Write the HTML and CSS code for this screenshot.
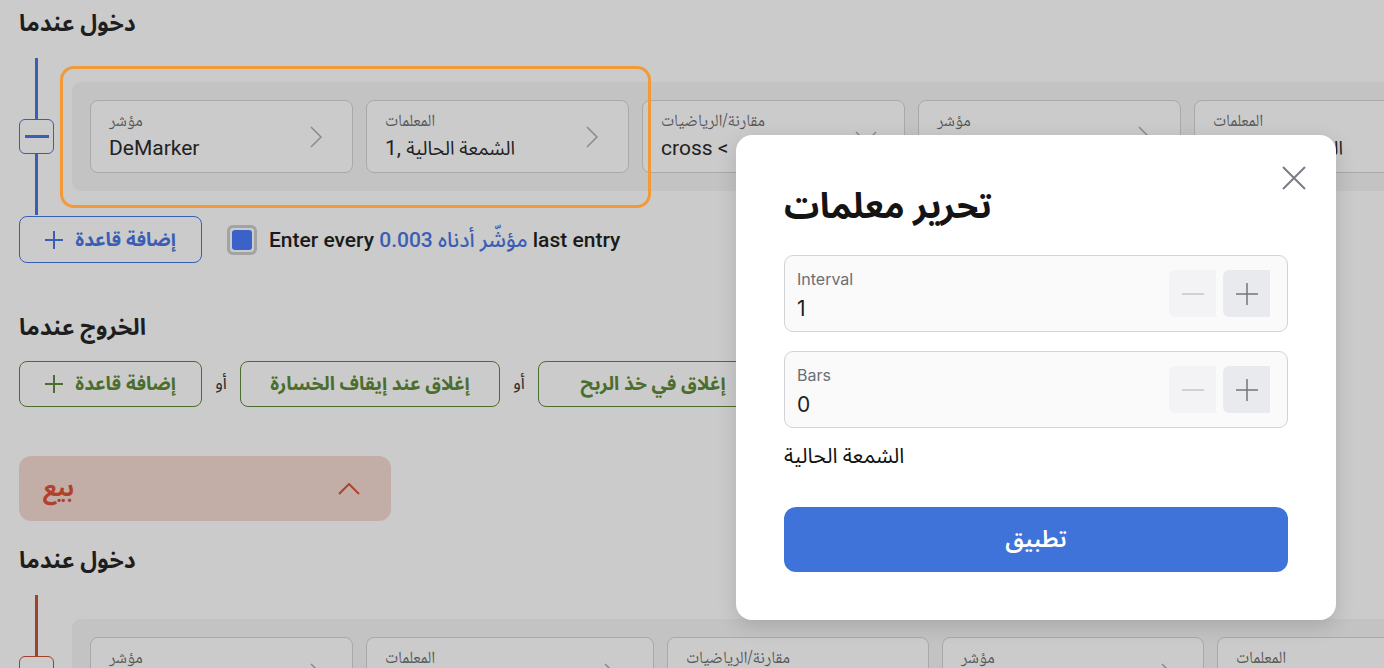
FILE: index.html
```html
<!DOCTYPE html>
<html lang="ar">
<head>
<meta charset="utf-8">
<title>تحرير معلمات</title>
<link rel="stylesheet" href="styles.css">
</head>
<body>
<div class="page">
  <h2 class="section-title">دخول عندما</h2>
  <div class="rule-block">
    <div class="rail rail-blue">
      <span class="rail-line"></span>
      <span class="rail-btn"><span class="rail-minus"></span></span>
      <span class="rail-line"></span>
    </div>
    <div class="group">
      <div class="card w263">
        <div class="card-text"><span class="card-label">مؤشر</span><span class="card-value">DeMarker</span></div>
        <svg class="chev" viewBox="0 0 12 22"><path d="M1 1l10 10L1 21"/></svg>
      </div>
      <div class="card w263">
        <div class="card-text"><span class="card-label">المعلمات</span><span class="card-value">1, <span class="ar">الشمعة الحالية</span></span></div>
        <svg class="chev" viewBox="0 0 12 22"><path d="M1 1l10 10L1 21"/></svg>
      </div>
      <div class="card w263">
        <div class="card-text"><span class="card-label">مقارنة/الرياضيات</span><span class="card-value">cross &lt;</span></div>
        <svg class="chev-down" viewBox="0 0 22 12"><path d="M1 1l10 10L21 1"/></svg>
      </div>
      <div class="card w263">
        <div class="card-text"><span class="card-label">مؤشر</span><span class="card-value">DeMarker</span></div>
        <svg class="chev" viewBox="0 0 12 22"><path d="M1 1l10 10L1 21"/></svg>
      </div>
      <div class="card w263">
        <div class="card-text"><span class="card-label">المعلمات</span><span class="card-value">1, <span class="ar">الشمعة الحالية</span></span></div>
        <svg class="chev" viewBox="0 0 12 22"><path d="M1 1l10 10L1 21"/></svg>
      </div>
      <div class="highlight"></div>
    </div>
  </div>

  <div class="add-row">
    <button class="rule-btn btn-blue">
      <svg class="plus" viewBox="0 0 18 18"><path d="M9 0v18M0 9h18"/></svg>
      <span>إضافة قاعدة</span>
    </button>
    <span class="check"><span class="check-fill"></span></span>
    <span class="every">Enter every <span class="every-accent">0.003 مؤشّر أدناه</span> last entry</span>
  </div>

  <h2 class="section-title exit-title">الخروج عندما</h2>
  <div class="exit-row">
    <button class="rule-btn btn-green">
      <svg class="plus" viewBox="0 0 18 18"><path d="M9 0v18M0 9h18"/></svg>
      <span>إضافة قاعدة</span>
    </button>
    <span class="or">أو</span>
    <button class="rule-btn btn-green wide">إغلاق عند إيقاف الخسارة</button>
    <span class="or">أو</span>
    <button class="rule-btn btn-green wide2">إغلاق في خذ الربح</button>
  </div>

  <div class="sell-bar">
    <span class="sell-label">بيع</span>
    <svg class="sell-chev" viewBox="0 0 22 12"><path d="M1 11L11 1l10 10"/></svg>
  </div>

  <h2 class="section-title second-title">دخول عندما</h2>
  <div class="rule-block">
    <div class="rail rail-red">
      <span class="rail-line"></span>
      <span class="rail-btn"><span class="rail-minus"></span></span>
      <span class="rail-line"></span>
    </div>
    <div class="group">
      <div class="card w263">
        <div class="card-text"><span class="card-label">مؤشر</span><span class="card-value">DeMarker</span></div>
        <svg class="chev" viewBox="0 0 12 22"><path d="M1 1l10 10L1 21"/></svg>
      </div>
      <div class="card w288">
        <div class="card-text"><span class="card-label">المعلمات</span><span class="card-value">1, <span class="ar">الشمعة الحالية</span></span></div>
        <svg class="chev" viewBox="0 0 12 22"><path d="M1 1l10 10L1 21"/></svg>
      </div>
      <div class="card w262">
        <div class="card-text"><span class="card-label">مقارنة/الرياضيات</span><span class="card-value">cross &gt;</span></div>
        <svg class="chev-down" viewBox="0 0 22 12"><path d="M1 1l10 10L21 1"/></svg>
      </div>
      <div class="card w262">
        <div class="card-text"><span class="card-label">مؤشر</span><span class="card-value">DeMarker</span></div>
        <svg class="chev" viewBox="0 0 12 22"><path d="M1 1l10 10L1 21"/></svg>
      </div>
      <div class="card w263">
        <div class="card-text"><span class="card-label">المعلمات</span><span class="card-value">1, <span class="ar">الشمعة الحالية</span></span></div>
        <svg class="chev" viewBox="0 0 12 22"><path d="M1 1l10 10L1 21"/></svg>
      </div>
    </div>
  </div>
</div>

<div class="modal">
  <svg class="close" viewBox="0 0 24 24"><path d="M1 1l22 22M23 1L1 23"/></svg>
  <h1 class="modal-title">تحرير معلمات</h1>
  <div class="field">
    <div class="field-text">
      <span class="field-label">Interval</span>
      <span class="field-value">1</span>
    </div>
    <div class="stepper">
      <span class="step step-minus"><svg viewBox="0 0 22 22"><path d="M0 11h22"/></svg></span>
      <span class="step step-plus"><svg viewBox="0 0 22 22"><path d="M11 0v22M0 11h22"/></svg></span>
    </div>
  </div>
  <div class="field">
    <div class="field-text">
      <span class="field-label">Bars</span>
      <span class="field-value">0</span>
    </div>
    <div class="stepper">
      <span class="step step-minus"><svg viewBox="0 0 22 22"><path d="M0 11h22"/></svg></span>
      <span class="step step-plus"><svg viewBox="0 0 22 22"><path d="M11 0v22M0 11h22"/></svg></span>
    </div>
  </div>
  <p class="candle">الشمعة الحالية</p>
  <button class="apply">تطبيق</button>
</div>
</body>
</html>
```

FILE: styles.css
```css
* { box-sizing: border-box; }

html, body {
  margin: 0;
  padding: 0;
}

body {
  width: 1384px;
  height: 668px;
  overflow: hidden;
  background: #cbcbcb;
  font-family: Roboto, "Noto Sans Arabic", "Noto Sans", "DejaVu Sans", sans-serif;
  color: #1c1c1c;
  position: relative;
}

.page {
  padding: 10px 0 0 19px;
  height: 668px;
  overflow: hidden;
}

.section-title {
  margin: 0;
  font-size: 23px;
  line-height: 28px;
  font-weight: 700;
  color: #1e1e1e;
}

.rule-block {
  margin-top: 20px;
  display: flex;
  align-items: center;
  gap: 18px;
}

.rail {
  width: 35px;
  flex-shrink: 0;
  display: flex;
  flex-direction: column;
  align-items: center;
}

.rail-line {
  display: block;
  width: 3px;
  height: 61px;
}

.rail-btn {
  width: 35px;
  height: 35px;
  border-radius: 6px;
  display: flex;
  align-items: center;
  justify-content: center;
  border: 1px solid;
}

.rail-minus {
  display: block;
  width: 24px;
  height: 3px;
}

.rail-blue .rail-line, .rail-blue .rail-minus { background: #3a5eb5; }
.rail-blue .rail-btn { border-color: #3a5eb5; }
.rail-red .rail-line, .rail-red .rail-minus { background: #a3402b; }
.rail-red .rail-btn { border-color: #a3402b; }

.group {
  position: relative;
  flex: 1;
  min-width: 0;
  margin-right: -30px;
  height: 109px;
  padding: 18px;
  background: #c3c3c3;
  border-radius: 9px;
  display: flex;
  gap: 13px;
}

.highlight {
  position: absolute;
  left: -12px;
  top: -16px;
  width: 591px;
  height: 142px;
  border: 3px solid #f19a3a;
  border-radius: 14px;
}

.card {
  flex-shrink: 0;
  height: 73px;
  border: 1px solid #a9a9a9;
  border-radius: 8px;
  background: #cbcbcb;
  display: flex;
  align-items: center;
  justify-content: space-between;
  padding: 0 30px 0 18px;
}

.w263 { width: 263px; }
.w262 { width: 262px; }
.w288 { width: 288px; padding-right: 37px; }

.card-text {
  display: flex;
  flex-direction: column;
  padding-top: 3px;
}

.card-label {
  font-family: "Noto Naskh Arabic", "Noto Sans Arabic", "DejaVu Sans", sans-serif;
  font-size: 17px;
  line-height: 20px;
  color: #575757;
}

.card-value {
  font-size: 21px;
  line-height: 30px;
  color: #222;
  white-space: nowrap;
}

.card-value .ar { font-size: 19px; }

.chev {
  width: 12px;
  height: 22px;
  fill: none;
  stroke: #8a8a8a;
  stroke-width: 1.5;
}

.chev-down {
  width: 22px;
  height: 12px;
  fill: none;
  stroke: #8a8a8a;
  stroke-width: 1.5;
  margin-right: -3px;
}

.add-row {
  margin-top: 1px;
  display: flex;
  align-items: center;
}

.rule-btn {
  height: 47px;
  border-radius: 8px;
  background: transparent;
  border: 1px solid;
  display: flex;
  align-items: center;
  justify-content: center;
  gap: 12px;
  font-family: inherit;
  font-size: 19px;
  font-weight: 700;
  padding: 0 16px;
}

.add-row .rule-btn { width: 183px; }

.plus {
  width: 18px;
  height: 18px;
  fill: none;
  stroke: currentColor;
  stroke-width: 2;
}

.btn-blue { border-color: #3a5eb5; color: #3a5eb5; }

.check {
  margin-left: 25px;
  width: 30px;
  height: 30px;
  border: 3px solid #a3a3a3;
  border-radius: 6px;
  padding: 2px;
  display: flex;
}

.check-fill {
  flex: 1;
  background: #3a62c8;
  border-radius: 3px;
}

.every {
  margin-left: 12px;
  font-size: 21px;
  font-weight: 500;
  color: #1a1a1a;
}

.every-accent { color: #3a5eb5; }

.exit-title { margin-top: 51px; }

.exit-row {
  margin-top: 19px;
  display: flex;
  align-items: center;
}

.exit-row .rule-btn { height: 46px; }
.exit-row .rule-btn:first-child { width: 183px; }

.btn-green { border-color: #4b6d2d; color: #4b6d2d; }
.wide { width: 260px; }
.wide2 { width: 230px; }

.or {
  width: 38px;
  text-align: center;
  font-size: 17px;
  color: #2a2a2a;
}

.sell-bar {
  margin-top: 49px;
  width: 372px;
  height: 65px;
  background: #c3aea7;
  border-radius: 12px;
  display: flex;
  align-items: center;
  justify-content: space-between;
  padding: 0 31px 0 24px;
}

.sell-label {
  font-size: 24px;
  font-weight: 700;
  color: #b0412a;
}

.sell-chev {
  width: 22px;
  height: 12px;
  fill: none;
  stroke: #b0412a;
  stroke-width: 2;
}

.second-title { margin-top: 26px; }

/* modal */
.modal {
  position: absolute;
  left: 736px;
  top: 135px;
  width: 600px;
  height: 485px;
  background: #fff;
  border-radius: 16px;
  box-shadow: 0 6px 20px rgba(0, 0, 0, 0.14);
  padding: 50px 48px 0;
}

.close {
  position: absolute;
  right: 30px;
  top: 31px;
  width: 24px;
  height: 24px;
  fill: none;
  stroke: #7a7d86;
  stroke-width: 2;
}

.modal-title {
  margin: 0;
  font-size: 35px;
  line-height: 44px;
  font-weight: 700;
  color: #141414;
}

.field {
  margin-top: 26px;
  width: 504px;
  height: 77px;
  border: 1px solid #d3d3d8;
  border-radius: 9px;
  background: #fafafa;
  display: flex;
  align-items: center;
  justify-content: space-between;
  padding: 0 17px 0 12px;
}

.field + .field { margin-top: 19px; }

.field-text {
  display: flex;
  flex-direction: column;
  padding-top: 6px;
}

.field-label {
  font-family: Inter, Roboto, sans-serif;
  font-size: 16px;
  line-height: 22px;
  color: #6b6e75;
}

.field-value {
  font-family: Inter, Roboto, sans-serif;
  font-size: 21px;
  line-height: 32px;
  color: #1f1f1f;
  padding-top: 3px;
}

.stepper {
  display: flex;
  gap: 7px;
}

.step {
  width: 47px;
  height: 47px;
  border-radius: 6px 0 0 6px;
  display: flex;
  align-items: center;
  justify-content: center;
}

.step svg {
  width: 22px;
  height: 22px;
  fill: none;
  stroke-width: 1.5;
}

.step-minus { background: #f3f3f5; }
.step-minus svg { stroke: #c4c5ca; }
.step-plus { background: #e9eaed; }
.step-plus svg { stroke: #73767e; }

.candle {
  margin: 14px 0 0;
  font-size: 21px;
  line-height: 28px;
  color: #111;
}

.apply {
  margin-top: 37px;
  width: 504px;
  height: 65px;
  border: none;
  border-radius: 12px;
  background: #3f73d9;
  color: #fff;
  font-family: inherit;
  font-size: 23px;
  font-weight: 600;
}
```
